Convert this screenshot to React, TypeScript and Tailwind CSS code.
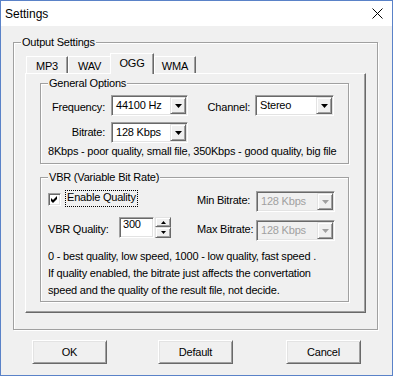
import React from "react";

const sunken =
  "border border-t-[#a0a0a0] border-l-[#a0a0a0] border-b-white border-r-white shadow-[inset_1px_1px_0_#696969,inset_-1px_-1px_0_#e3e3e3]";
const raised =
  "border border-t-[#e3e3e3] border-l-[#e3e3e3] border-b-[#696969] border-r-[#696969] shadow-[inset_1px_1px_0_#fff,inset_-1px_-1px_0_#a0a0a0]";
const pushButton =
  "border border-t-white border-l-white border-b-[#696969] border-r-[#696969] shadow-[inset_1px_1px_0_#e3e3e3,inset_-1px_-1px_0_#a0a0a0]";

function Group({
  label,
  className,
  children,
}: {
  label: string;
  className: string;
  children: React.ReactNode;
}) {
  return (
    <div
      className={`relative border border-[#a0a0a0] shadow-[inset_1px_1px_0_#fff,1px_1px_0_#fff] ${className}`}
    >
      <span className="absolute left-[7px] top-[-7px] bg-[#f0f0f0] px-[1px] leading-[13px]">
        {label}
      </span>
      {children}
    </div>
  );
}

function Combo({
  value,
  className,
  disabled,
}: {
  value: string;
  className: string;
  disabled?: boolean;
}) {
  return (
    <div
      className={`flex h-[21px] p-[1px] ${sunken} ${
        disabled ? "bg-[#f0f0f0] text-[#a0a0a0]" : "bg-white"
      } ${className}`}
    >
      <span className="flex-1 self-center pl-[3px] leading-[13px]">{value}</span>
      <span className={`flex w-[16px] items-center justify-center bg-[#f0f0f0] ${raised}`}>
        <svg width="7" height="4" viewBox="0 0 7 4">
          <polygon points="0,0 7,0 3.5,4" fill={disabled ? "#a0a0a0" : "#000"} />
        </svg>
      </span>
    </div>
  );
}

function Tab({ label, className }: { label: string; className: string }) {
  return (
    <div
      className={`flex h-[17px] items-center justify-center border-l border-t border-l-white border-t-white pt-[2px] leading-[13px] ${className}`}
    >
      {label}
    </div>
  );
}

function Spin() {
  return (
    <div className="ml-[1px] flex h-[21px] w-[16px] flex-col">
      <span className={`flex h-[10px] items-center justify-center bg-[#f0f0f0] ${raised}`}>
        <svg width="5" height="3" viewBox="0 0 5 3">
          <polygon points="2.5,0 5,3 0,3" fill="#000" />
        </svg>
      </span>
      <span className={`flex h-[11px] items-center justify-center bg-[#f0f0f0] ${raised}`}>
        <svg width="5" height="3" viewBox="0 0 5 3">
          <polygon points="0,0 5,0 2.5,3" fill="#000" />
        </svg>
      </span>
    </div>
  );
}

export default function App() {
  return (
    <div className="h-[376px] w-[393px] overflow-hidden border border-[#5a82c8] bg-[#f0f0f0] font-['Liberation_Sans',Arial,sans-serif] text-[11px] tracking-[-0.2px] text-black">
      {/* title bar */}
      <div className="flex h-[25px] items-center justify-between bg-white pl-[4px] pr-[9px]">
        <span className="text-[12px] tracking-normal">Settings</span>
        <svg width="11" height="11" viewBox="0 0 11 11">
          <path d="M0.5 0.5 L10.5 10.5 M10.5 0.5 L0.5 10.5" stroke="#000" strokeWidth="1" />
        </svg>
      </div>

      <Group label="Output Settings" className="ml-[12px] mt-[16px] h-[288px] w-[365px]">
        <div className="pl-[11px] pt-[10px]">
          <div className="flex h-[20px] items-end pl-[1px]">
            <Tab
              label="MP3"
              className="w-[42px] border-r border-r-[#696969] shadow-[inset_-1px_0_0_#a0a0a0]"
            />
            <Tab label="WAV" className="w-[42px]" />
            <div className="relative z-10 -mb-[1px] flex h-[21px] w-[44px] items-center justify-center border-l border-r border-t border-l-white border-r-[#696969] border-t-white bg-[#f0f0f0] pb-[2px] leading-[13px] shadow-[inset_-1px_0_0_#a0a0a0]">
              OGG
            </div>
            <Tab
              label="WMA"
              className="w-[42px] border-r border-r-[#696969] shadow-[inset_-1px_0_0_#a0a0a0]"
            />
          </div>

          <div className="h-[240px] w-[341px] border border-b-[#696969] border-l-white border-r-[#696969] border-t-white pl-[14px] pt-[9px] shadow-[inset_-1px_-1px_0_#a0a0a0]">
            <Group label="General Options" className="h-[81px] w-[309px]">
              <div className="flex h-[21px] items-center mt-[11px]">
                <span className="w-[64px] pt-[4px] text-right leading-[13px]">Frequency:</span>
                <Combo value="44100 Hz" className="ml-[6px] w-[77px]" />
                <span className="w-[62px] pt-[4px] text-right leading-[13px]">Channel:</span>
                <Combo value="Stereo" className="ml-[5px] w-[79px]" />
              </div>
              <div className="mt-[6px] flex h-[21px] items-center">
                <span className="w-[64px] text-right leading-[13px]">Bitrate:</span>
                <Combo value="128 Kbps" className="ml-[6px] w-[77px]" />
              </div>
              <p className="mt-[2px] pl-[7px] leading-[13px]">
                8Kbps - poor quality, small file, 350Kbps - good quality, big file
              </p>
            </Group>

            <Group label="VBR (Variable Bit Rate)" className="mt-[13px] h-[125px] w-[309px]">
              <div className="grid grid-cols-[156px_1fr] pt-[12px]">
                <div className="flex flex-col">
                  <div className="flex h-[17px] items-start pl-[7px]">
                    <span className={`mt-[3px] flex h-[13px] w-[13px] items-center justify-center bg-white p-[1px] ${sunken}`}>
                      <svg width="9" height="9" viewBox="0 0 9 9">
                        <polygon points="1,3 3,5 7,1 7,4 3,8 1,6" fill="#000" />
                      </svg>
                    </span>
                    <span className="ml-[4px] h-[17px] border border-dotted border-black px-[1px] leading-[13px]">
                      Enable Quality
                    </span>
                  </div>
                  <div className="mt-[10px] flex h-[21px] items-center">
                    <span className="w-[78px] pl-[7px] pt-[4px] leading-[13px]">VBR Quality:</span>
                    <div className={`h-[21px] w-[35px] bg-white p-[1px] ${sunken}`}>
                      <span className="block pl-[2px] leading-[10px]">300</span>
                    </div>
                    <Spin />
                  </div>
                </div>
                <div className="flex flex-col">
                  <div className="mt-[1px] flex h-[21px] items-center">
                    <span className="w-[59px] pb-[2px] leading-[13px]">Min Bitrate:</span>
                    <Combo value="128 Kbps" className="w-[79px]" disabled />
                  </div>
                  <div className="mt-[8px] flex h-[21px] items-center">
                    <span className="w-[59px] pb-[2px] leading-[13px]">Max Bitrate:</span>
                    <Combo value="128 Kbps" className="w-[79px]" disabled />
                  </div>
                </div>
              </div>
              <div className="mt-[7px] pl-[7px] leading-[17px]">
                <p>0 - best quality, low speed, 1000 - low quality, fast speed .</p>
                <p>If quality enabled, the bitrate just affects the convertation</p>
                <p>speed and the quality of the result file, not decide.</p>
              </div>
            </Group>
          </div>
        </div>
      </Group>

      <div className="ml-[31px] mt-[10px] flex">
        <button className={`h-[24px] w-[75px] bg-[#f0f0f0] leading-[13px] ${pushButton}`}>OK</button>
        <button className={`ml-[51px] h-[24px] w-[75px] bg-[#f0f0f0] leading-[13px] ${pushButton}`}>
          Default
        </button>
        <button className={`ml-[53px] h-[24px] w-[75px] bg-[#f0f0f0] leading-[13px] ${pushButton}`}>
          Cancel
        </button>
      </div>
    </div>
  );
}
